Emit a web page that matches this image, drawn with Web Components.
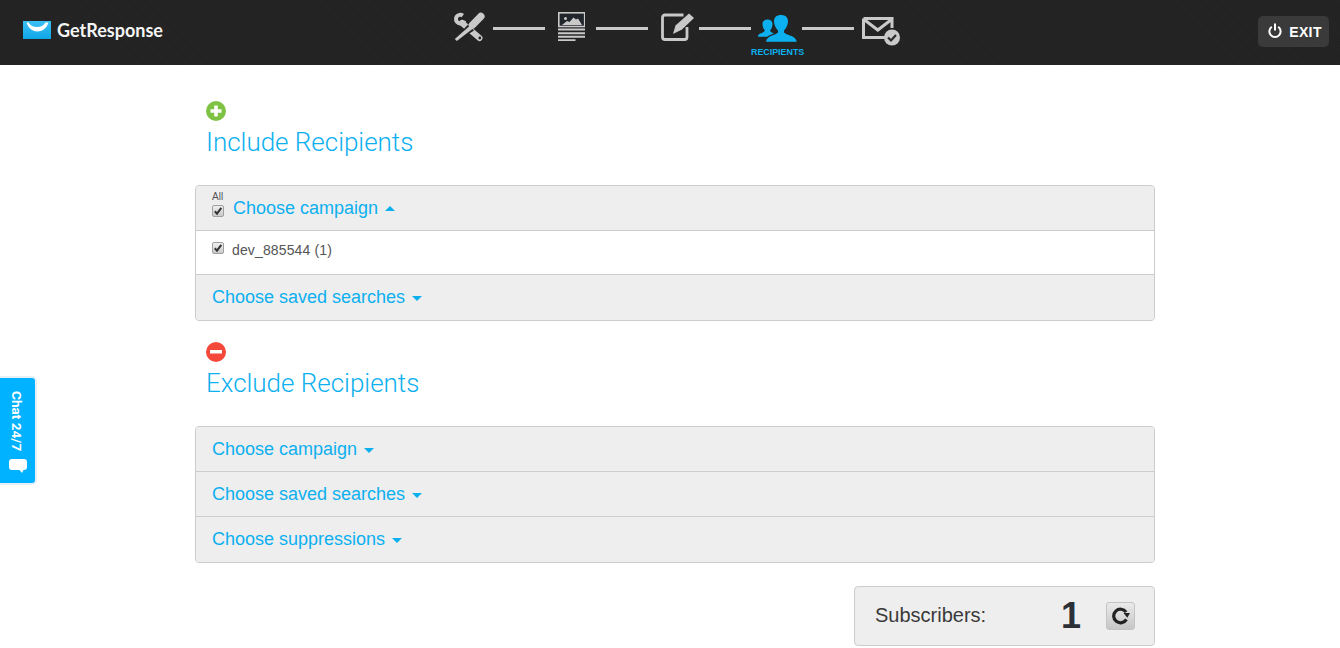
<!DOCTYPE html>
<html><head><meta charset="utf-8"><style>
html,body{margin:0;padding:0;background:#fff;height:648px;overflow:hidden;font-family:"Liberation Sans",Arial,sans-serif}
</style></head><body>
<gr-topbar></gr-topbar>
<chat-tab></chat-tab>
<gr-main>
  <recipient-section kind="include" heading="Include Recipients">
    <panel-row variant="all" label="Choose campaign" open></panel-row>
    <list-row label="dev_885544 (1)"></list-row>
    <panel-row label="Choose saved searches" h="45"></panel-row>
  </recipient-section>
  <recipient-section kind="exclude" heading="Exclude Recipients">
    <panel-row label="Choose campaign"></panel-row>
    <panel-row label="Choose saved searches"></panel-row>
    <panel-row label="Choose suppressions" h="45"></panel-row>
  </recipient-section>
  <subscriber-box count="1"></subscriber-box>
</gr-main>
<script>
const def=(n,html)=>customElements.define(n,class extends HTMLElement{connectedCallback(){if(this.shadowRoot)return;const r=this.attachShadow({mode:'open'});r.innerHTML=typeof html==='function'?html(this):html;}});
const C='#c9c9c9';
def('gr-topbar',`<style>
:host{display:flex;align-items:flex-start;height:65px;background-color:#222;background-image:repeating-linear-gradient(45deg,rgba(255,255,255,.012) 0 1px,transparent 1px 2px);color:#fff}
.logo{display:flex;align-items:center;gap:6px;margin:20px 0 0 23px;width:141px;height:20px;flex:none}
.logo b{font:700 18px/20px Lato,sans-serif;letter-spacing:0;color:#f4f4f4;white-space:nowrap}
nav{display:flex;align-items:flex-start;margin-left:289px;flex:none}
.ln{display:block;width:52px;height:3px;background:${C};margin-top:27px}
.st{position:relative;display:block;flex:none}
.st svg{display:block}
.st small{position:absolute;left:-7px;top:47px;width:53px;text-align:center;font:700 8.9px/10px "Liberation Sans",sans-serif;color:#0db0ef;white-space:nowrap}
.exit{margin:16px 11px 0 auto;width:71px;height:31px;border-radius:5px;background:#3a3a3a;display:flex;align-items:center;justify-content:center;gap:7px;font:700 14px/31px "Liberation Sans",sans-serif;letter-spacing:.4px;color:#fff;box-sizing:border-box;padding-left:3px}
.exit svg{margin-top:-2px}
.exit span{margin-top:1px}
</style>
<div class="logo"><svg width="28" height="18" viewBox="0 0 28 18"><defs><linearGradient id="lg" x1="0" y1="0" x2="0" y2="1"><stop offset="0" stop-color="#3cc0f4"/><stop offset="1" stop-color="#0fa6e6"/></linearGradient></defs><rect width="28" height="18" fill="url(#lg)"/><path d="M3.500 1.500H5.500C9 7.500 19 7.500 22.500 1.500H25.500C22 13.500 7 13.500 3.500 1.500Z" fill="#fff"/></svg><b>GetResponse</b></div>
<nav>
<span class="st" style="width:32px;height:65px"><svg width="32" height="65" viewBox="0 0 32 65" fill="none"><g transform="translate(0,12)"><path d="M9.800 3.600A4.300 4.300 0 1 0 11.300 8.500" stroke="${C}" stroke-width="4"/><path d="M9 11L26.500 26" stroke="${C}" stroke-width="6" stroke-linecap="round"/><circle cx="26.800" cy="26" r="1.400" fill="#222"/><path d="M15 12.500L21 18.500L4 29.500L1.500 27Z" fill="#222"/><path d="M27.800 4.500L19.500 13" stroke="${C}" stroke-width="7.500" stroke-linecap="round"/><path d="M16.500 14L19.500 17L3.800 29L1.800 27Z" fill="${C}"/></g></svg></span>
<span class="ln" style="margin-left:8px"></span>
<span class="st" style="margin-left:13px"><svg width="27" height="65" viewBox="0 0 27 65"><rect x=".8" y="12.800" width="25.900" height="13.700" fill="#20262c" stroke="${C}" stroke-width="1.600"/><path d="M4 25L9 21L11.500 22L15.500 17.500L18 19.500L20 18.500L24 25Z" fill="${C}"/><circle cx="7.500" cy="18.500" r="1.500" fill="${C}"/><path fill="${C}" d="M0 28.600h27.500v2H0zM0 32.300h27.500v2H0zM0 35.800h27.500v2H0zM0 39.300h17.500v1.700H0z"/></svg></span>
<span class="ln" style="margin-left:11px"></span>
<span class="st" style="margin-left:13px"><svg width="33" height="65" viewBox="0 0 33 65" fill="none" style="overflow:visible"><path d="M22.500 15H4Q1.500 15 1.500 17.500V37Q1.500 39.500 4 39.500H23.500Q26 39.500 26 37V27" stroke="${C}" stroke-width="2.800"/><path d="M28 13.500L33 18L21 29.500L12 34L14.500 25.500Z" fill="${C}"/></svg></span>
<span class="ln" style="margin-left:5px"></span>
<span class="st" style="margin-left:7px;width:39px"><svg width="39" height="65" viewBox="0 0 39 65"><path fill="#0db0ef" d="M0 36.800C0 34 2.500 33.500 5 32.500L7 30.500C5.500 29 4.500 26.500 4.500 24C4.500 21 6.500 19.500 9.500 19.500C12.500 19.500 14.500 21 14.500 24C14.500 26.500 13.500 29 12 30.500L13 32C14.500 32.500 15 33 16 33.500C13 34.500 10.500 35.500 9 36.800Z"/><path fill="#0db0ef" d="M8 41.700C9 37 13 36 17.500 34.300L20 32.500V30.500C18 28.500 16 25 16 21.500C16 17 19 15 23 15C27 15 30 17 30 21.500C30 25 28 28.500 26 30.500V32.500L28.500 34.300C33 36 38 37 38.700 41.700Z"/></svg><small>RECIPIENTS</small></span>
<span class="ln" style="margin-left:5px"></span>
<span class="st" style="margin-left:8px;width:38px"><svg width="38" height="65" viewBox="0 0 38 65" fill="none"><path d="M1.500 18.500H30V28M23 37.500H1.500V18.500M2 19.500L15.800 30L29.500 19.500" stroke="${C}" stroke-width="3"/><circle cx="30" cy="37.500" r="8" fill="${C}"/><path d="M26 37.500L29 40.500L34 35" stroke="#2a2a2a" stroke-width="2.200"/></svg></span>
</nav>
<div class="exit"><svg width="14" height="15" viewBox="0 0 14 15" fill="none" stroke="#fff" stroke-width="2"><path d="M3.800 3.800A5.600 5.600 0 1 0 10.200 3.800"/><path d="M7 .5V7.500"/></svg><span>EXIT</span></div>`);
def('chat-tab',`<style>
:host{position:absolute;left:0;top:378px;width:35px;height:105px;background:#00b2ff;border-radius:0 3px 3px 0;box-shadow:0 0 0 2px #e9f0f5;display:block;color:#fff}
.t{position:absolute;left:9px;top:13px;writing-mode:vertical-rl;font:700 13.600px/16px Roboto,"Liberation Sans",sans-serif;white-space:nowrap}
svg{position:absolute;left:9px;top:81px}
</style><span class="t">Chat 24/7</span><svg width="18" height="15" viewBox="0 0 18 15"><path fill="#fff" d="M3 0H15Q18 0 18 3V8Q18 11 15 11H14.500L13 14L10.500 11H3Q0 11 0 8V3Q0 0 3 0Z"/></svg>`);
def('gr-main',`<style>:host{display:block;width:960px;margin-left:195px}</style><slot></slot>`);
def('recipient-section',h=>{const inc=h.getAttribute('kind')==='include';return `<style>
:host{display:block;padding-top:36px}
:host([kind=exclude]){padding-top:21px}
.ic{display:block;margin-left:11px}
h2{margin:5px 0 0 11px;font:300 26px/32px Roboto,sans-serif;color:#0db0ef;height:32px;letter-spacing:-.02px}
.p{margin-top:27px;border:1px solid #ccc;border-radius:4px;overflow:hidden;background:#eee}
::slotted(*:not(:first-child)){border-top:1px solid #ccc}
</style>
<svg class="ic" width="20" height="20" viewBox="0 0 20 20"><circle cx="10" cy="10" r="10" fill="${inc?'#7dc242':'#f4483a'}"/>${inc?'<path d="M8.200 4.500h3.600v3.700h3.700v3.600h-3.700v3.700H8.200v-3.700H4.500V8.200h3.700z" fill="#fff"/>':'<rect x="4" y="8" width="12" height="3.500" fill="#fff"/>'}</svg>
<h2>${h.getAttribute('heading')}</h2>
<div class="p"><slot></slot></div>`});
const cb=`<svg width="12" height="12" viewBox="0 0 12 12" style="display:block"><defs><linearGradient id="g" x1="0" y1="0" x2="0" y2="1"><stop offset="0" stop-color="#f1f1f1"/><stop offset="1" stop-color="#c8c8c8"/></linearGradient></defs><rect x=".5" y=".5" width="11" height="11" rx="1.500" fill="url(#g)" stroke="#a0a0a0"/><path d="M2.800 6.200L5 8.600L9.300 2.800" fill="none" stroke="#333" stroke-width="2"/></svg>`;
def('panel-row',h=>{const all=h.getAttribute('variant')==='all',open=h.hasAttribute('open');return `<style>
:host{display:flex;align-items:center;height:44px;background:#eee;padding-left:16px;position:relative;color:#0db0ef;font:18px/24px "Liberation Sans",sans-serif}
:host([h="45"]){padding-bottom:1px}
.all{width:21px;flex:none;align-self:flex-start;color:#555;font:10px/11px "Liberation Sans",sans-serif;padding-top:5px}
.all span{display:block;margin-bottom:3px}
.c{display:block;width:0;height:0;margin-left:7px;border-left:5px solid transparent;border-right:5px solid transparent;${open?'border-bottom:5px solid #0db0ef':'border-top:5px solid #0db0ef;margin-top:3px'}}
</style>${all?`<div class="all"><span>All</span>${cb}</div>`:''}<span>${h.getAttribute('label')}</span><i class="c"></i>`});
def('list-row',h=>`<style>
:host{display:flex;align-items:flex-start;height:44px;background:#fff;padding:11px 0 0 16px;box-sizing:border-box;font:14px/16px "Liberation Sans",sans-serif;letter-spacing:.14px;color:#555}
.l{margin-left:8px}
</style>${cb}<span class="l">${h.getAttribute('label')}</span>`);
def('subscriber-box',h=>`<style>
:host{display:flex;align-items:center;width:301px;height:60px;box-sizing:border-box;margin:23px 0 0 659px;border:1px solid #ccc;border-radius:4px;background:#eee;padding-left:20px;color:#3a3a3a}
.l{font:20px/24px "Liberation Sans",sans-serif;width:187px;margin-top:-2px}
.n{font:700 36px/40px "Liberation Sans",sans-serif;width:44px;color:#2b2f36;position:relative;left:-1px}
.btn{width:29px;height:28px;box-sizing:border-box;border:1px solid #c4c4c4;border-radius:3px;background:linear-gradient(#eaeaea,#c6c6c6);display:flex;align-items:center;justify-content:center}
</style><span class="l">Subscribers:</span><span class="n">${h.getAttribute('count')}</span><span class="btn"><svg width="18" height="18" viewBox="0 0 18 18" fill="none"><path d="M14.400 12.400A6.800 6.800 0 1 1 14.070 5.100" stroke="#222" stroke-width="3.200"/><path d="M11.500 6H18L15.300 10.800Z" fill="#222"/></svg></span>`);
</script>
</body></html>
